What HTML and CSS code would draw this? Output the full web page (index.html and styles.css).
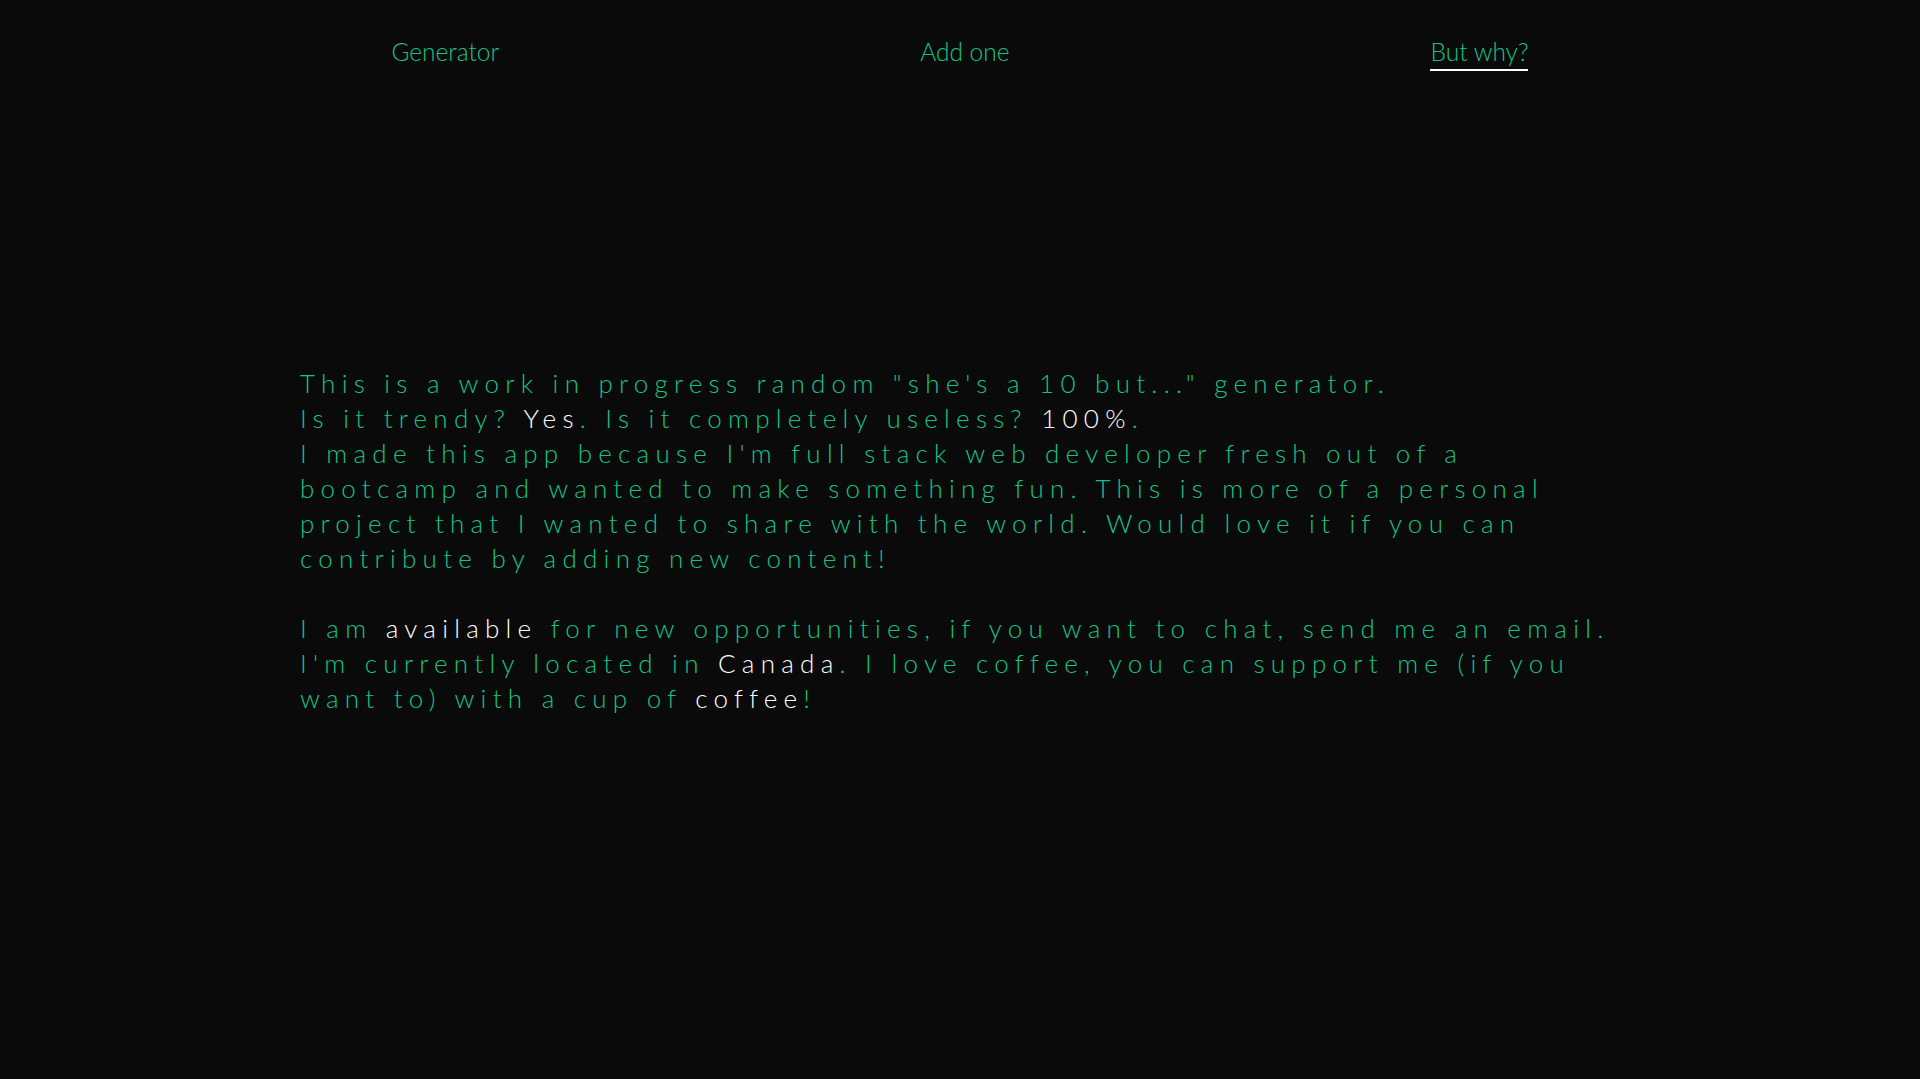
FILE: index.html
```html
<!DOCTYPE html>
<html lang="en">
<head>
<meta charset="utf-8">
<title>But why?</title>
<link rel="stylesheet" href="styles.css">
</head>
<body>
<nav class="nav">
  <a class="nav-link" href="#">Generator</a>
  <a class="nav-link" href="#">Add one</a>
  <a class="nav-link active" href="#">But why?</a>
</nav>
<main class="about">
  <p class="about-text">This is a work in progress random "she's a 10 but..." generator.<br>Is it trendy? <span class="hl">Yes</span>. Is it completely useless? <span class="hl">100%</span>.<br>I made this app because I'm full stack web developer fresh out of a bootcamp and wanted to make something fun. This is more of a personal project that I wanted to share with the world. Would love it if you can contribute by adding new content!<br><br>I am <a class="hl" href="#">available</a> for new opportunities, if you want to chat, send me an email. I'm currently located in <span class="hl">Canada</span>. I love coffee, you can support me (if you want to) with a cup of <a class="hl" href="#">coffee</a>!</p>
</main>
</body>
</html>
```

FILE: styles.css
```css
html, body {
  margin: 0;
  padding: 0;
  background: #0a0a0a;
}
body {
  font-family: Lato, "Open Sans", sans-serif;
  font-weight: 300;
  color: #14c486;
  min-height: 100vh;
}
.nav {
  display: flex;
  justify-content: space-around;
  align-items: flex-start;
  padding: 35px 181px 0;
}
.nav-link {
  font-size: 24.5px;
  line-height: 34px;
  color: #14c486;
  text-decoration: none;
  border-bottom: 2px solid transparent;
}
.nav-link.active {
  border-bottom-color: #ffffff;
}
.about {
  width: 1320px;
  margin: 0 auto;
  padding-top: 295px;
}
.about-text {
  margin: 0;
  font-size: 26px;
  line-height: 35px;
  letter-spacing: 6.25px;
}
.hl {
  color: #ffffff;
  text-decoration: none;
}
```
